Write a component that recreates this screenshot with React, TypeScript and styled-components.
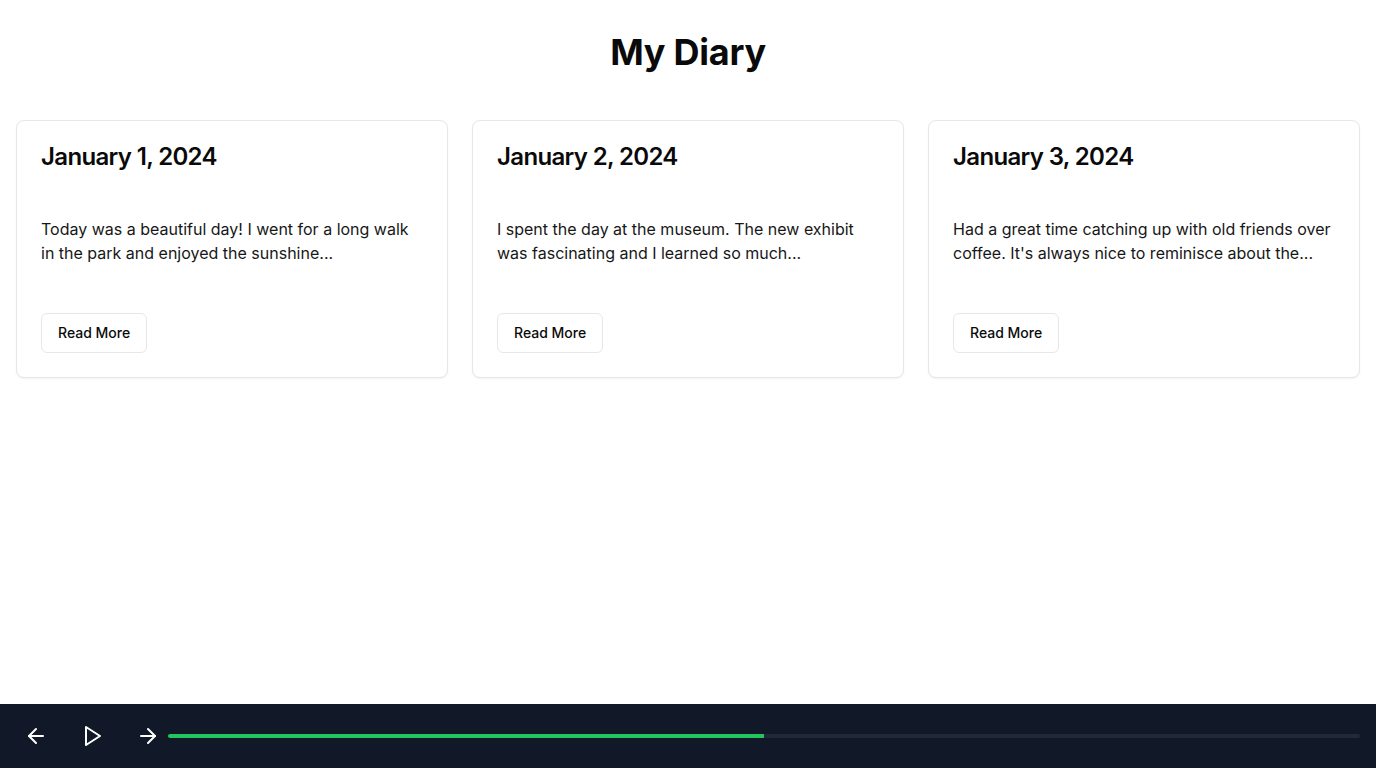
import React from "react";
import styled, { createGlobalStyle } from "styled-components";

const GlobalStyle = createGlobalStyle`
  * { box-sizing: border-box; }
  html, body { margin: 0; padding: 0; background: #ffffff; }
  body {
    font-family: Inter, "Noto Sans", "Liberation Sans", sans-serif;
    color: #0a0a0a;
    -webkit-font-smoothing: antialiased;
  }
`;

const Page = styled.div`
  min-height: 768px;
  display: flex;
  flex-direction: column;
`;

const Main = styled.main`
  flex: 1;
  padding: 32px 16px 0;
`;

const Title = styled.h1`
  margin: 0 0 48px;
  font-size: 36px;
  line-height: 40px;
  font-weight: 700;
  letter-spacing: -0.25px;
  text-align: center;
  color: #0a0a0a;
`;

const Grid = styled.div`
  display: grid;
  grid-template-columns: repeat(3, 1fr);
  gap: 24px;
`;

const Card = styled.article`
  border: 1px solid #e5e7eb;
  border-radius: 8px;
  background: #ffffff;
  box-shadow: 0 1px 2px rgba(0, 0, 0, 0.05);
`;

const CardHeader = styled.div`
  padding: 24px;
`;

const CardTitle = styled.h2`
  margin: 0;
  font-size: 24px;
  line-height: 24px;
  font-weight: 600;
  letter-spacing: -0.65px;
  color: #0a0a0a;
`;

const CardContent = styled.div`
  padding: 24px;
`;

const Excerpt = styled.p`
  margin: 0;
  font-size: 16px;
  line-height: 24px;
  color: #171717;
`;

const CardFooter = styled.div`
  padding: 24px;
  display: flex;
`;

const ReadMore = styled.button`
  height: 40px;
  padding: 0 16px 1px;
  border: 1px solid #e5e7eb;
  border-radius: 6px;
  background: #ffffff;
  font-family: inherit;
  font-size: 14px;
  line-height: 20px;
  font-weight: 500;
  color: #0a0a0a;
  cursor: pointer;
`;

const PlayerBar = styled.footer`
  height: 64px;
  background: #111827;
  display: flex;
  align-items: center;
  padding: 0 16px;
`;

const Controls = styled.div`
  display: flex;
  align-items: center;
  gap: 16px;
`;

const IconButton = styled.button`
  width: 40px;
  height: 40px;
  padding: 8px;
  border: none;
  background: transparent;
  color: #ffffff;
  display: flex;
  align-items: center;
  justify-content: center;
  cursor: pointer;
`;

const Track = styled.div`
  flex: 1;
  height: 4px;
  background: #1f2937;
  border-radius: 2px;
  overflow: hidden;
`;

const Fill = styled.div`
  height: 100%;
  background: #22c55e;
`;

const Icon: React.FC<{ children: React.ReactNode }> = ({ children }) => (
  <svg
    width="24"
    height="24"
    viewBox="0 0 24 24"
    fill="none"
    stroke="currentColor"
    strokeWidth="2"
    strokeLinecap="round"
    strokeLinejoin="round"
  >
    {children}
  </svg>
);

const entries = [
  {
    date: "January 1, 2024",
    text: "Today was a beautiful day! I went for a long walk in the park and enjoyed the sunshine...",
  },
  {
    date: "January 2, 2024",
    text: "I spent the day at the museum. The new exhibit was fascinating and I learned so much...",
  },
  {
    date: "January 3, 2024",
    text: "Had a great time catching up with old friends over coffee. It's always nice to reminisce about the...",
  },
];

export default function App() {
  const progress = 50;
  return (
    <>
      <GlobalStyle />
      <Page>
        <Main>
          <Title>My Diary</Title>
          <Grid>
            {entries.map((e) => (
              <Card key={e.date}>
                <CardHeader>
                  <CardTitle>{e.date}</CardTitle>
                </CardHeader>
                <CardContent>
                  <Excerpt>{e.text}</Excerpt>
                </CardContent>
                <CardFooter>
                  <ReadMore>Read More</ReadMore>
                </CardFooter>
              </Card>
            ))}
          </Grid>
        </Main>
        <PlayerBar>
          <Controls>
            <IconButton aria-label="Previous">
              <Icon>
                <path d="m12 19-7-7 7-7" />
                <path d="M19 12H5" />
              </Icon>
            </IconButton>
            <IconButton aria-label="Play">
              <Icon>
                <polygon points="6 3 20 12 6 21 6 3" />
              </Icon>
            </IconButton>
            <IconButton aria-label="Next">
              <Icon>
                <path d="M5 12h14" />
                <path d="m12 5 7 7-7 7" />
              </Icon>
            </IconButton>
          </Controls>
          <Track>
            <Fill style={{ width: `${progress}%` }} />
          </Track>
        </PlayerBar>
      </Page>
    </>
  );
}
